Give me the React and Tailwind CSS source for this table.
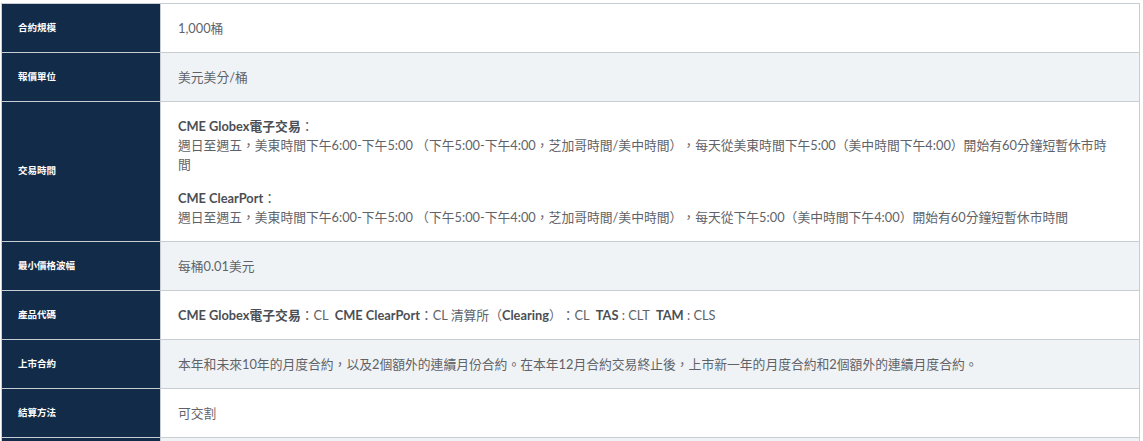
import React from 'react';

const rows = [
  { label: '合約規模', content: <p>1,000桶</p> },
  { label: '報價單位', content: <p>美元美分/桶</p> },
  {
    label: '交易時間',
    content: (
      <div className="flex flex-col gap-[15px]">
        <p>
          <b className="font-bold text-[#4b4f55]">CME Globex電子交易</b>：<br />
          週日至週五，美東時間下午6:00-下午5:00 （下午5:00-下午4:00，芝加哥時間/美中時間），每天從美東時間下午5:00（美中時間下午4:00）開始有60分鐘短暫休市時間
        </p>
        <p>
          <b className="font-bold text-[#4b4f55]">CME ClearPort</b>：<br />
          週日至週五，美東時間下午6:00-下午5:00 （下午5:00-下午4:00，芝加哥時間/美中時間），每天從下午5:00（美中時間下午4:00）開始有60分鐘短暫休市時間
        </p>
      </div>
    ),
  },
  { label: '最小價格波幅', content: <p>每桶0.01美元</p> },
  {
    label: '產品代碼',
    content: (
      <p>
        <b className="font-bold text-[#4b4f55]">CME Globex電子交易</b>：CL&nbsp;&nbsp;
        <b className="font-bold text-[#4b4f55]">CME ClearPort</b>：CL 清算所（<b className="font-bold text-[#4b4f55]">Clearing</b>）：CL&nbsp;&nbsp;
        <b className="font-bold text-[#4b4f55]">TAS</b> : CLT&nbsp;&nbsp;
        <b className="font-bold text-[#4b4f55]">TAM</b> : CLS
      </p>
    ),
  },
  {
    label: '上市合約',
    content: (
      <p>本年和未來10年的月度合約，以及2個額外的連續月份合約。在本年12月合約交易終止後，上市新一年的月度合約和2個額外的連續月度合約。</p>
    ),
  },
  { label: '結算方法', content: <p>可交割</p> },
  { label: '', content: <p>&nbsp;</p> },
];

export default function App() {
  return (
    <div
      className="bg-white h-[441px] overflow-hidden pt-[3px] pl-px pr-[3px] [text-spacing-trim:space-all]"
      style={{ fontFamily: 'Lato, "Noto Sans CJK TC", sans-serif' }}
    >
      <table className="w-[1139px] border-collapse table-fixed">
        <tbody>
          {rows.map((r, i) => (
            <tr key={i} className={i % 2 === 1 ? 'bg-[#f0f3f6]' : 'bg-white'}>
              <th className="w-[159px] bg-[#122b48] border border-[#c7cdd3] pl-4 pr-2 text-left align-middle text-[9.5px] font-bold text-white">
                {r.label}
              </th>
              <td className="border border-[#c7cdd3] pl-[17px] pr-6 pt-[15px] pb-[14px] align-middle text-[12.8px] leading-[19px] text-[#5f6368]">
                {r.content}
              </td>
            </tr>
          ))}
        </tbody>
      </table>
    </div>
  );
}
